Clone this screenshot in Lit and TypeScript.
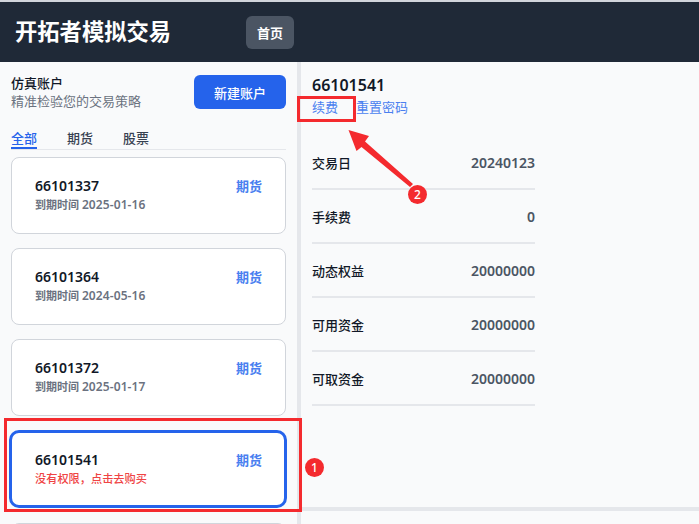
import { LitElement, html, css } from "lit";
import { customElement } from "lit/decorators.js";

const accounts = [
  { id: "66101337", date: "2025-01-16" },
  { id: "66101364", date: "2024-05-16" },
  { id: "66101372", date: "2025-01-17" },
];
const rows = [
  ["交易日", "20240123"],
  ["手续费", "0"],
  ["动态权益", "20000000"],
  ["可用资金", "20000000"],
  ["可取资金", "20000000"],
];

@customElement("app-root")
export class AppRoot extends LitElement {
  static styles = css`
    :host {
      display: block;
      width: 699px;
      height: 524px;
      overflow: hidden;
      position: relative;
      background: #f9fafb;
      font-family: "Noto Sans", "Noto Sans CJK SC", sans-serif;
    }
    .top { height: 2px; background: #d1d5db; }
    header {
      height: 60px;
      background: #1f2937;
      display: flex;
      align-items: center;
      padding-left: 15px;
      box-sizing: border-box;
    }
    h1 { margin: 0; font-size: 22.3px; line-height: 30px; font-weight: 700; color: #fff; width: 231px; }
    .home {
      width: 48px; height: 33px; border-radius: 6px; background: #4b5563;
      color: #fff; font-size: 13px; font-weight: 700;
      display: flex; align-items: center; justify-content: center;
    }
    main { display: flex; height: 462px; }
    .left { width: 297px; flex: none; padding: 13px 11px 0 11px; box-sizing: border-box; overflow: hidden; }
    .divider { width: 4px; background: #e5e7eb; flex: none; }
    .right { flex: 1; }
    .intro { display: flex; justify-content: space-between; align-items: flex-start; }
    .intro b { display: block; font-size: 13px; line-height: 18px; font-weight: 500; color: #111827; margin-top: -1px; }
    .intro span { display: block; font-size: 13px; line-height: 18px; color: #6b7280; }
    .new {
      width: 92px; height: 34px; border-radius: 6px; background: #2563eb;
      color: #fff; font-size: 13px; font-weight: 500;
      display: flex; align-items: center; justify-content: center;
    }
    .tabs { display: flex; gap: 30px; margin-top: 19px; border-bottom: 1px solid #e5e7eb; height: 20px; }
    .tab { font-size: 13px; line-height: 19px; font-weight: 500; color: #374151; height: 20px; box-sizing: border-box; }
    .tab.on { color: #2563eb; border-bottom: 2px solid #2563eb; }
    .cards { display: flex; flex-direction: column; gap: 14.5px; margin-top: 7px; }
    .card {
      height: 76.5px; box-sizing: border-box; background: #fff; border: 1px solid #d1d5db;
      border-radius: 8px; padding: 18px 23px 0 23px; display: flex; justify-content: space-between;
      flex: none;
    }
    .card.active {
      border: 3px solid #2563eb; height: 78px; width: 278px;
      margin-left: -2px; border-radius: 10px; padding: 17px 22px 0 23px;
    }
    .id { font-size: 14px; line-height: 20px; font-weight: 600; color: #111827; }
    .sub { font-size: 11px; line-height: 18px; font-weight: 600; color: #6b7280; }
    .sub i { font-style: normal; font-size: 12px; letter-spacing: 0.1px; }
    .sub.err { color: #ef4444; font-size: 11.2px; font-weight: 500; }
    .kind { font-size: 13px; line-height: 20px; font-weight: 600; color: #4a7ff0; }
    .panel { height: 449px; padding: 12px 0 0 11px; box-sizing: border-box; border-bottom: 4px solid #e5e7eb; }
    .pid { font-size: 16px; line-height: 22px; font-weight: 600; color: #111827; }
    .links { display: flex; gap: 18px; font-size: 13px; line-height: 20px; color: #4a7ff0; margin-top: 1px; }
    .stats { width: 223px; margin-top: 19px; }
    .row {
      height: 54px; box-sizing: border-box; border-bottom: 2px solid #e5e7eb;
      display: flex; justify-content: space-between; align-items: center;
      font-size: 13px; font-weight: 500; color: #111827;
    }
    .row span:last-child { color: #4b5563; font-size: 14px; font-weight: 600; }
    .mark { position: absolute; border: 3px solid #f42a2e; box-sizing: border-box; }
    .m1 { left: 4px; top: 418px; width: 298px; height: 94px; }
    .m2 { left: 297px; top: 96px; width: 59px; height: 26px; }
    .badge {
      position: absolute; width: 19px; height: 19px; border-radius: 50%; background: #f42a2e;
      color: #fff; font-size: 12px; font-weight: 500;
      display: flex; align-items: center; justify-content: center;
    }
    .b1 { left: 305px; top: 458px; }
    .b2 { left: 408px; top: 185px; }
    svg { position: absolute; left: 340px; top: 120px; }
  `;

  render() {
    return html`
      <div class="top"></div>
      <header>
        <h1>开拓者模拟交易</h1>
        <div class="home">首页</div>
      </header>
      <main>
        <section class="left">
          <div class="intro">
            <div><b>仿真账户</b><span>精准检验您的交易策略</span></div>
            <div class="new">新建账户</div>
          </div>
          <div class="tabs">
            <div class="tab on">全部</div>
            <div class="tab">期货</div>
            <div class="tab">股票</div>
          </div>
          <div class="cards">
            ${accounts.map(
              (a) => html`
                <div class="card">
                  <div>
                    <div class="id">${a.id}</div>
                    <div class="sub">到期时间 <i>${a.date}</i></div>
                  </div>
                  <div class="kind">期货</div>
                </div>
              `
            )}
            <div class="card active">
              <div>
                <div class="id">66101541</div>
                <div class="sub err">没有权限，点击去购买</div>
              </div>
              <div class="kind">期货</div>
            </div>
            <div class="card"></div>
          </div>
        </section>
        <div class="divider"></div>
        <section class="right">
          <div class="panel">
            <div class="pid">66101541</div>
            <div class="links"><span>续费</span><span>重置密码</span></div>
            <div class="stats">
              ${rows.map(
                ([k, v]) => html`<div class="row"><span>${k}</span><span>${v}</span></div>`
              )}
            </div>
          </div>
        </section>
      </main>
      <div class="mark m1"></div>
      <div class="mark m2"></div>
      <div class="badge b1">1</div>
      <div class="badge b2">2</div>
      <svg width="80" height="80" viewBox="0 0 80 80">
        <polygon points="8.5,10 29,16 25,21.5 73,64 70,67 21.5,27 16.5,31" fill="#f42a2e"></polygon>
      </svg>
    `;
  }
}
